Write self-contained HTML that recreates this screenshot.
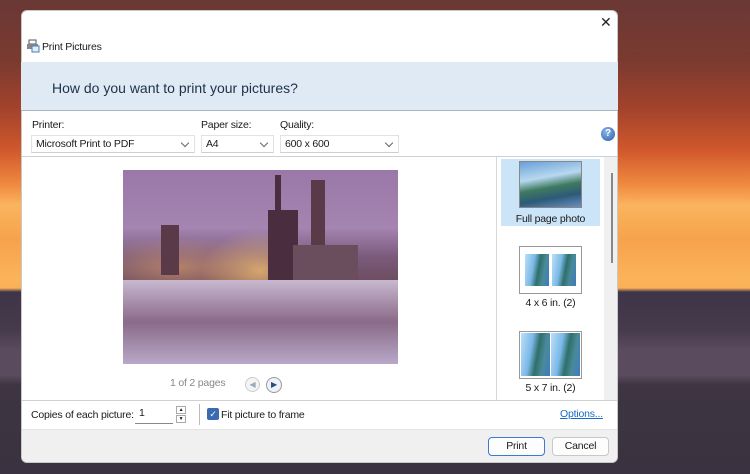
<!DOCTYPE html><html><head><style>
*{margin:0;padding:0;box-sizing:border-box}
body{width:750px;height:474px;overflow:hidden;position:relative;font-family:"Liberation Sans",sans-serif;font-size:10.5px;letter-spacing:-0.2px;color:#1a1a1a;
background:linear-gradient(180deg,#6a3835 0,#7a3a30 60px,#a4432c 110px,#d0582c 150px,#f08a40 185px,#fab45e 205px,#f7a24c 240px,#fbb45a 280px,#fab058 288px,#3f3548 292px,#463a4c 330px,#5a4c5e 350px,#5a4c5e 375px,#3e3542 385px,#3a3240 474px)}
.dlg{position:absolute;left:21px;top:10px;width:597px;height:453px;background:#fff;border-radius:6px;overflow:hidden;border:1px solid #c8c8c8}
.abs{position:absolute}
.sel{position:absolute;height:18px;border:1px solid #e2e2e2;border-bottom-color:#cfcfcf;background:#fff;padding:2px 4px}
.sel:after{content:"";position:absolute;right:6px;top:4px;width:5px;height:5px;border-right:1px solid #666;border-bottom:1px solid #666;transform:rotate(45deg)}
.lbl{position:absolute}
.btn{position:absolute;height:19px;border:1px solid #c8c8c8;border-radius:4px;background:#fdfdfd;text-align:center;line-height:17px}
.thumb{position:absolute;background:#fff;border:1px solid #999}
.pic{position:absolute;background:linear-gradient(100deg,#bde0f6 0,#7ab8e8 35%,#2f6f6a 55%,#4a8a9a 75%,#3e7bc0 100%)}
.tw{position:absolute;background:#4a2e40}
</style></head><body>
<div class="dlg"></div>
<div class="abs" style="left:21px;top:10px;width:597px;height:453px;border-radius:6px;overflow:hidden">
 <div class="abs" style="left:579px;top:4px;font-size:14px;color:#222">✕</div>
 <svg class="abs" style="left:5px;top:29px" width="14" height="14"><rect x="3" y="1" width="7" height="4" fill="#fff" stroke="#555"/><rect x="1" y="5" width="11" height="5" fill="#888"/><rect x="6" y="7" width="7" height="6" fill="#ddeeff" stroke="#4a7fb0"/></svg>
 <div class="abs" style="left:21px;top:31px">Print Pictures</div>
 <div class="abs" style="left:0;top:52px;width:597px;height:49px;background:#e0eaf5;border-bottom:1px solid #a8b4c0"></div>
 <div class="abs" style="left:31px;top:70px;font-size:14px;letter-spacing:0;color:#1e3048">How do you want to print your pictures?</div>
</div>
<div class="lbl" style="left:32px;top:119px">Printer:</div>
<div class="lbl" style="left:201px;top:119px">Paper size:</div>
<div class="lbl" style="left:280px;top:119px">Quality:</div>
<div class="sel" style="left:31px;top:135px;width:164px">Microsoft Print to PDF</div>
<div class="sel" style="left:201px;top:135px;width:73px">A4</div>
<div class="sel" style="left:280px;top:135px;width:119px">600 x 600</div>
<div class="abs" style="left:601px;top:127px;width:14px;height:14px;border-radius:50%;background:radial-gradient(circle at 40% 35%,#8ab8ea,#2a5aa8);color:#fff;font-size:10px;font-weight:bold;text-align:center;line-height:14px">?</div>
<div class="abs" style="left:22px;top:156px;width:595px;height:1px;background:#d0d0d0"></div>
<div class="abs" style="left:496px;top:157px;width:1px;height:243px;background:#d8d8d8"></div>
<div class="abs" style="left:604px;top:157px;width:13px;height:243px;background:#f0f0f0"></div>
<div class="abs" style="left:611px;top:173px;width:2px;height:90px;background:#888"></div>
<div class="abs" style="left:501px;top:159px;width:99px;height:67px;background:#cce4f7"></div>
<div class="pic" style="left:519px;top:161px;width:63px;height:47px;border:1px solid #888;background:linear-gradient(170deg,#6aa0d8 0,#b8d8f0 35%,#3f7a60 55%,#2c5a78 75%,#6a90c0 100%)"></div>
<div class="abs" style="left:501px;top:213px;width:99px;text-align:center">Full page photo</div>
<div class="thumb" style="left:519px;top:246px;width:63px;height:48px"></div>
<div class="pic" style="left:525px;top:254px;width:24px;height:32px"></div>
<div class="pic" style="left:552px;top:254px;width:24px;height:32px"></div>
<div class="abs" style="left:501px;top:297px;width:99px;text-align:center">4 x 6 in. (2)</div>
<div class="thumb" style="left:519px;top:331px;width:63px;height:48px"></div>
<div class="pic" style="left:521px;top:333px;width:29px;height:43px"></div>
<div class="pic" style="left:551px;top:333px;width:29px;height:43px"></div>
<div class="abs" style="left:501px;top:382px;width:99px;text-align:center">5 x 7 in. (2)</div>
<div class="abs" style="left:123px;top:170px;width:275px;height:194px;overflow:hidden;background:
radial-gradient(ellipse 60px 40px at 50% 52%,rgba(255,200,110,.7),transparent),
radial-gradient(ellipse 90px 30px at 20% 50%,rgba(240,170,100,.5),transparent),
linear-gradient(180deg,#9a78a8 0,#a484b0 30%,#7a5a7a 45%,#6a4a5a 60%,#b8a4c0 75%,#8a6888 100%)">
 <div class="tw" style="left:145px;top:40px;width:30px;height:75px"></div>
 <div class="tw" style="left:152px;top:5px;width:6px;height:40px"></div>
 <div class="tw" style="left:188px;top:10px;width:14px;height:105px;background:#5a3a48"></div>
 <div class="tw" style="left:170px;top:75px;width:65px;height:60px;background:#6a4e5e"></div>
 <div class="tw" style="left:38px;top:55px;width:18px;height:50px;background:#5a3a48"></div>
 <div class="abs" style="left:0;top:110px;width:275px;height:84px;background:linear-gradient(180deg,#c8b8d0,#8a6a88 50%,#b8a8c8)"></div>
</div>
<div class="abs" style="left:170px;top:377px;color:#888">1 of 2 pages</div>
<div class="abs" style="left:245px;top:377px;width:15px;height:15px;border-radius:50%;border:1px solid #ccc;background:#f4f4f4;color:#9ab;font-size:8px;text-align:center;line-height:13px">◀</div>
<div class="abs" style="left:266px;top:377px;width:16px;height:16px;border-radius:50%;border:1px solid #999;background:#eef2f8;color:#2a4a80;font-size:8px;text-align:center;line-height:14px">▶</div>
<div class="abs" style="left:22px;top:400px;width:595px;height:1px;background:#d0d0d0"></div>
<div class="abs" style="left:31px;top:409px">Copies of each picture:</div>
<div class="abs" style="left:135px;top:405px;width:38px;height:19px;border-bottom:1px solid #888;padding:2px 4px;background:#fff">1</div>
<div class="abs" style="left:176px;top:406px;width:10px;height:8px;border:1px solid #aaa;font-size:5px;text-align:center;line-height:6px">▲</div>
<div class="abs" style="left:176px;top:415px;width:10px;height:8px;border:1px solid #aaa;font-size:5px;text-align:center;line-height:6px">▼</div>
<div class="abs" style="left:199px;top:404px;width:1px;height:21px;background:#bbb"></div>
<div class="abs" style="left:207px;top:408px;width:12px;height:12px;border-radius:2px;background:#3a6ab0;color:#fff;font-size:9px;text-align:center;line-height:12px">✓</div>
<div class="abs" style="left:221px;top:409px">Fit picture to frame</div>
<div class="abs" style="left:560px;top:408px;color:#1a6ac8;text-decoration:underline">Options...</div>
<div class="abs" style="left:22px;top:429px;width:595px;height:33px;background:#f0f0f0;border-top:1px solid #e4e4e4;border-radius:0 0 6px 6px"></div>
<div class="btn" style="left:488px;top:437px;width:57px;border-color:#3a7ad0;line-height:16px">Print</div>
<div class="btn" style="left:552px;top:437px;width:57px;line-height:16px">Cancel</div>
</body></html>
